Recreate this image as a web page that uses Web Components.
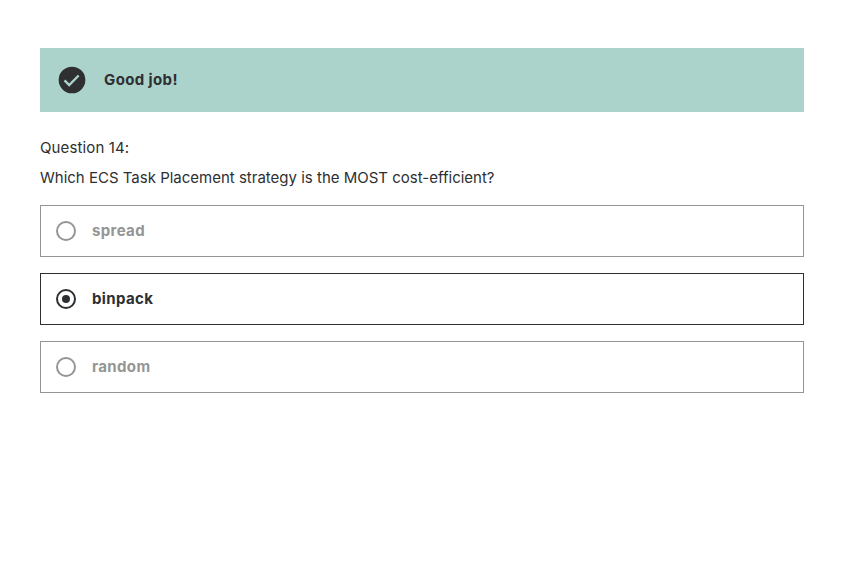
<!DOCTYPE html>
<html lang="en">
<head>
<meta charset="utf-8">
<title>Question 14</title>
<style>
body { margin: 0; background: #fff; color: #2d2f31; font: 400 15px/22px Inter, "Liberation Sans", sans-serif; }
</style>
</head>
<body>
<quiz-page>
  <quiz-alert>Good job!</quiz-alert>
  <quiz-question><span slot="number">Question 14:</span><span slot="prompt">Which ECS Task Placement strategy is the MOST cost-efficient?</span></quiz-question>
  <quiz-answers>
    <quiz-answer>spread</quiz-answer>
    <quiz-answer checked>binpack</quiz-answer>
    <quiz-answer>random</quiz-answer>
  </quiz-answers>
</quiz-page>
<script>
const define = (name, html) => customElements.define(name, class extends HTMLElement {
  constructor() {
    super();
    this.attachShadow({ mode: "open" }).innerHTML = html;
  }
});

define("quiz-page", `<style>
  :host { display: block; padding: 48px 37px 0 40px; }
</style><slot></slot>`);

define("quiz-alert", `<style>
  :host { display: flex; align-items: center; height: 64px; padding-left: 16px; gap: 16px; background: #acd2cc; box-sizing: border-box; font-weight: 700; letter-spacing: 0.38px; }
  svg { width: 32px; height: 32px; flex: none; }
</style>
<svg viewBox="0 0 24 24"><circle cx="12" cy="12" r="10" fill="#2d2f31"/><path d="M6.4 12.3 9.9 15.8 17 8.6" fill="none" stroke="#acd2cc" stroke-width="1.75"/></svg>
<span><slot></slot></span>`);

define("quiz-question", `<style>
  :host { display: flex; flex-direction: column; gap: 8px; padding: 25px 0 16px; }
  slot[name="number"] { letter-spacing: 0.12px; }
</style><slot name="number"></slot><slot name="prompt"></slot>`);

define("quiz-answers", `<style>
  :host { display: flex; flex-direction: column; gap: 16px; }
</style><slot></slot>`);

define("quiz-answer", `<style>
  :host { display: flex; align-items: center; gap: 16px; height: 52px; padding-left: 15px; box-sizing: border-box; border: 1px solid #959595; color: #959595; font-weight: 700; letter-spacing: 0.36px; }
  :host([checked]) { border-color: #2d2f31; color: #2d2f31; }
  i { width: 20px; height: 20px; box-sizing: border-box; border: 2px solid; border-radius: 50%; display: grid; place-items: center; }
  :host([checked]) i::after { content: ""; width: 8px; height: 8px; border-radius: 50%; background: currentColor; }
</style><i></i><span><slot></slot></span>`);
</script>
</body>
</html>
